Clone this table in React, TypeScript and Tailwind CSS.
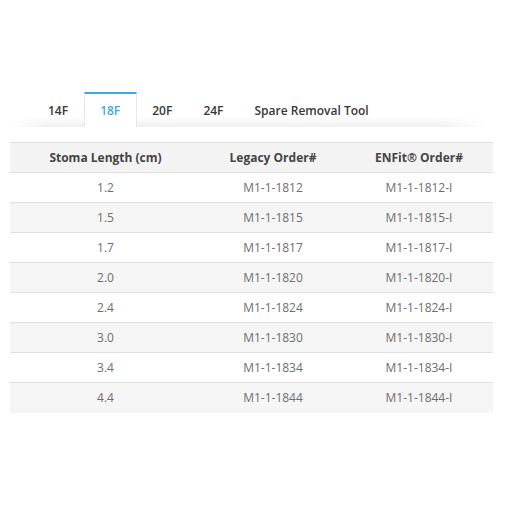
import React from "react";

const rows = [
  ["1.2", "M1-1-1812", "M1-1-1812-I"],
  ["1.5", "M1-1-1815", "M1-1-1815-I"],
  ["1.7", "M1-1-1817", "M1-1-1817-I"],
  ["2.0", "M1-1-1820", "M1-1-1820-I"],
  ["2.4", "M1-1-1824", "M1-1-1824-I"],
  ["3.0", "M1-1-1830", "M1-1-1830-I"],
  ["3.4", "M1-1-1834", "M1-1-1834-I"],
  ["4.4", "M1-1-1844", "M1-1-1844-I"],
];

const tabs = ["14F", "18F", "20F", "24F", "Spare Removal Tool"];

export default function App() {
  return (
    <div
      className="w-[507px] h-[507px] bg-white px-[10px] pt-[92px]"
      style={{ fontFamily: '"Open Sans", "Noto Sans", sans-serif' }}
    >
      <div className="w-[483px]">
        <div className="relative flex pl-[22.5px] h-[35px]">
          <div className="absolute left-0 right-0 bottom-0 h-[10px] bg-[linear-gradient(to_bottom,transparent,#efefef)] [mask-image:linear-gradient(to_right,transparent,black_8%,black_88%,transparent)]" />
          {tabs.map((t) =>
            t === "18F" ? (
              <div
                key={t}
                className="relative z-10 px-[15.5px] h-[35px] flex items-center bg-white border-t-2 border-[#3fa9e4] border-x border-x-[#e8e8e8] text-[12px] font-semibold text-[#3fa9e4]"
              >
                <span className="pt-[1px]">{t}</span>
              </div>
            ) : (
              <div
                key={t}
                className="relative z-10 px-[15.5px] h-[35px] flex items-center pt-[3px] text-[12px] font-semibold text-[#383838]"
              >
                {t}
              </div>
            )
          )}
        </div>
        <div className="mt-[15px] border-t border-[#dedede]">
          <div className="flex h-[30px] items-center bg-[#f3f3f3] border-b border-[#e0e0e0] text-[12px] font-bold text-[#444]">
            <div className="w-[191px] text-center">Stoma Length (cm)</div>
            <div className="w-[144px] text-center">Legacy Order#</div>
            <div className="w-[148px] text-center">ENFit® Order#</div>
          </div>
          {rows.map((r, i) => (
            <div
              key={i}
              className={`flex h-[30px] items-center text-[12px] text-[#6e6e6e] ${
                i % 2 === 1 ? "bg-[#f5f5f5]" : "bg-white"
              } ${i < rows.length - 1 ? "border-b border-[#e0e0e0]" : ""}`}
            >
              <div className="w-[191px] text-center">{r[0]}</div>
              <div className="w-[144px] text-center">{r[1]}</div>
              <div className="w-[148px] text-center">{r[2]}</div>
            </div>
          ))}
        </div>
      </div>
    </div>
  );
}
